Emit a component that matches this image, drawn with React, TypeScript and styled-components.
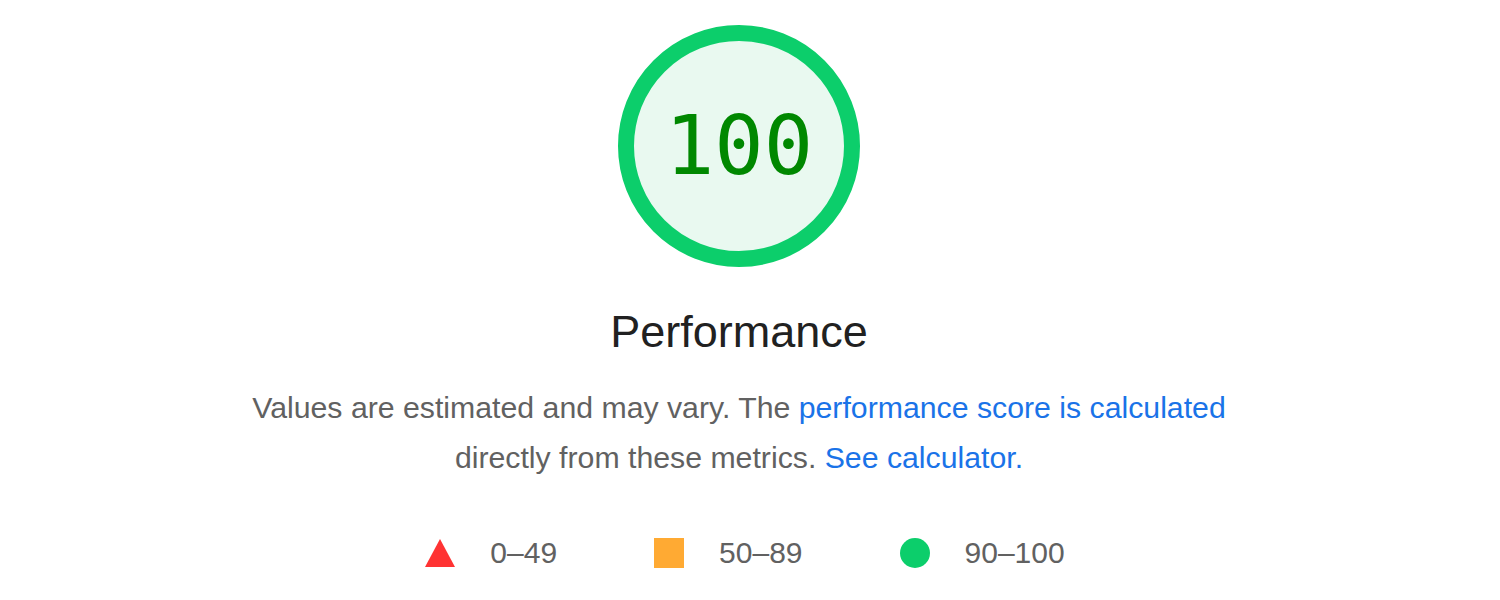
import React from "react";
import styled, { createGlobalStyle } from "styled-components";

const GlobalStyle = createGlobalStyle`
  html, body { margin: 0; padding: 0; background: #ffffff; }
  body { font-family: "Liberation Sans", Arial, Helvetica, sans-serif; }
`;

const Page = styled.main`
  width: 1500px;
  box-sizing: border-box;
  padding: 25px 22px 0 0;
  display: flex;
  flex-direction: column;
  align-items: center;
`;

const Gauge = styled.div`
  width: 242px;
  height: 242px;
  box-sizing: border-box;
  border: 16px solid #0cce6b;
  border-radius: 50%;
  background: #e9f9f0;
  display: flex;
  align-items: center;
  justify-content: center;
`;

const Score = styled.span`
  font-family: "DejaVu Sans Mono", "Liberation Mono", monospace;
  font-size: 82px;
  line-height: 1;
  color: #008800;
  font-feature-settings: "zero" 1;
  font-variant-numeric: slashed-zero;
`;

const Title = styled.h1`
  margin: 39px 0 0;
  font-size: 45px;
  line-height: 52px;
  font-weight: 400;
  color: #212121;
`;

const Description = styled.p`
  margin: 25px 0 0;
  max-width: 1000px;
  text-align: center;
  font-size: 30.25px;
  line-height: 50px;
  color: #616161;
`;

const Link = styled.a`
  color: #1a73e8;
  text-decoration: none;
`;

const Legend = styled.div`
  margin-top: 55px;
  padding-left: 12px;
  display: flex;
  align-items: center;
  gap: 97px;
`;

const LegendItem = styled.div`
  display: flex;
  align-items: center;
  gap: 35px;
  font-size: 30px;
  line-height: 30px;
  color: #616161;
`;

const Triangle = styled.span`
  width: 0;
  height: 0;
  border-left: 15px solid transparent;
  border-right: 15px solid transparent;
  border-bottom: 28px solid #ff3333;
`;

const Square = styled.span`
  width: 30px;
  height: 30px;
  background: #ffaa33;
`;

const Dot = styled.span`
  width: 30px;
  height: 30px;
  border-radius: 50%;
  background: #0cce6b;
`;

export default function App() {
  return (
    <>
      <GlobalStyle />
      <Page>
        <Gauge>
          <Score>100</Score>
        </Gauge>
        <Title>Performance</Title>
        <Description>
          Values are estimated and may vary. The{" "}
          <Link href="#">performance score is calculated</Link> directly from
          these metrics. <Link href="#">See calculator.</Link>
        </Description>
        <Legend>
          <LegendItem>
            <Triangle />
            <span>0–49</span>
          </LegendItem>
          <LegendItem>
            <Square />
            <span>50–89</span>
          </LegendItem>
          <LegendItem>
            <Dot />
            <span>90–100</span>
          </LegendItem>
        </Legend>
      </Page>
    </>
  );
}
